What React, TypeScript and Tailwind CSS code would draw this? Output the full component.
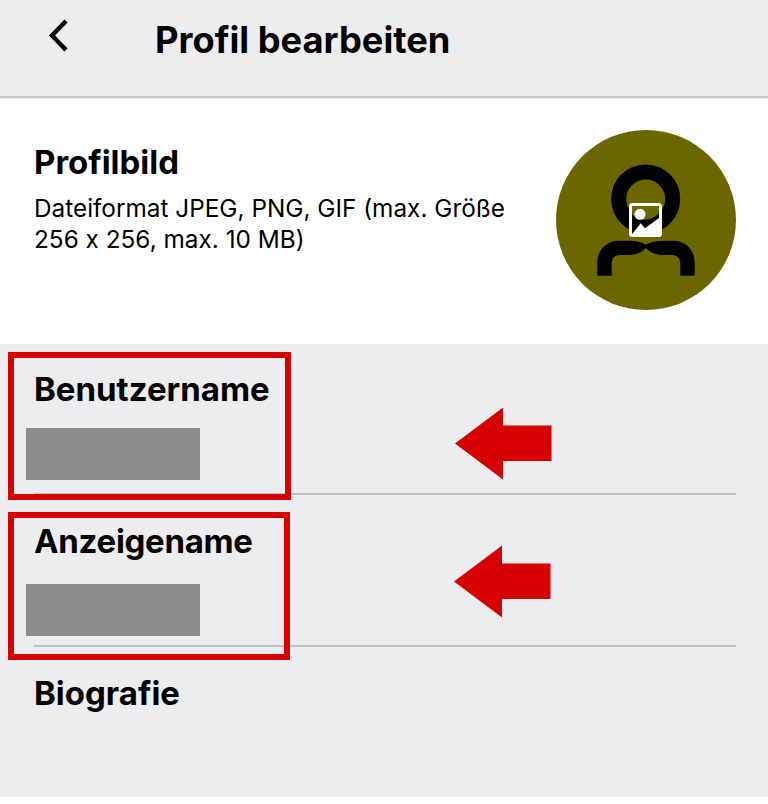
const font = "font-['Inter','Liberation_Sans',sans-serif] [font-feature-settings:'calt'_0]";

function Avatar() {
  return (
    <div className="w-[180px] h-[180px] rounded-full bg-[#6b6600] shrink-0">
      <svg width="180" height="180" viewBox="0 0 180 180">
        <circle cx="89.7" cy="69" r="27" fill="none" stroke="#000" strokeWidth="15" />
        <path
          d="M41.3 145.7 V133 C41.3 120 50 110.7 63 110.7 H72 C80 110.7 86 112 90 114.5 C94 112 100 110.7 108 110.7 H117 C130 110.7 138.7 120 138.7 133 V145.7 H124.3 V133 C124.3 128 121 125 116 125 H108 C100 125 94 122.5 90 118 C86 122.5 80 125 72 125 H64 C59 125 55.7 128 55.7 133 V145.7 Z"
          fill="#000"
        />
        <rect x="74.5" y="74.5" width="30" height="31" fill="#6b6600" />
        <path d="M75 83 C82 92 96 92 104 82 V105 H75 Z" fill="#000" />
        <circle cx="84" cy="84.3" r="5.5" fill="#fff" />
        <path d="M76 104 L84.7 93.3 L89 98.3 L103 88 V105 H76 Z" fill="#fff" />
        <rect x="74.5" y="74.5" width="30" height="31" rx="2" fill="none" stroke="#fff" strokeWidth="3" />
      </svg>
    </div>
  );
}

function Arrow() {
  return (
    <svg width="97" height="73" viewBox="0 0 97 73" className="block">
      <path d="M0 36.5 L48 0.5 V18.5 H96.5 V54 H48 V72.5 Z" fill="#d60000" />
    </svg>
  );
}

function Field({ label, redacted, h, labelClass, barClass }: { label: string; redacted?: boolean; h: string; labelClass: string; barClass?: string }) {
  return (
    <div className={`${h} ml-[34px] mr-[32px] ${redacted ? "border-b-2 border-[#bfbfc1]" : ""}`}>
      <div className={`text-[33px] leading-[36px] font-bold text-black ${labelClass}`}>{label}</div>
      {redacted && <div className={`w-[174px] h-[52px] bg-[#8c8c8c] -ml-2 ${barClass}`} />}
    </div>
  );
}

export default function App() {
  return (
    <div className={`${font} w-[768px] h-[804px] bg-white overflow-hidden relative`}>
      <header className="relative h-[98px] bg-[#ededf0] border-b-2 border-[#c9c9cb] shadow-[0_1px_2px_rgba(0,0,0,0.12)] flex items-start">
        <svg width="24" height="36" viewBox="0 0 24 36" className="ml-[47px] mt-[18px]">
          <path d="M19 3 L5 17.5 L19 32" fill="none" stroke="#000" strokeWidth="4.5" />
        </svg>
        <h1 className="ml-[84px] mt-[18px] text-[36.3px] leading-[44px] font-bold text-black">Profil bearbeiten</h1>
      </header>
      <section className="h-[246px] flex justify-between pl-[34px] pr-[32px] pt-[32px]">
        <div className="w-[480px] pt-[14px]">
          <div className="text-[33px] leading-[36px] font-bold text-black">Profilbild</div>
          <p className="mt-[13px] text-[24.35px] leading-[31px] text-black">
            Dateiformat JPEG, PNG, GIF (max. Größe 256 x 256, max. 10 MB)
          </p>
        </div>
        <Avatar />
      </section>
      <main className="h-[453px] bg-[#ededf0] pt-[27px]">
        <Field label="Benutzername" redacted h="h-[124px]" labelClass="" barClass="mt-[21px]" />
        <Field label="Anzeigename" redacted h="h-[152px]" labelClass="pt-[28px] h-[64px] box-border tracking-[-0.3px]" barClass="mt-[25px]" />
        <Field label="Biografie" h="h-[60px]" labelClass="pt-[28px]" />
      </main>
      <div className="absolute left-[8px] top-[352px] w-[283px] h-[148px] border-[6px] border-[#d60000]" />
      <div className="absolute left-[8px] top-[512px] w-[282px] h-[148px] border-[6px] border-[#d60000]" />
      <div className="absolute left-[455px] top-[407px]"><Arrow /></div>
      <div className="absolute left-[454px] top-[545px]"><Arrow /></div>
    </div>
  );
}
